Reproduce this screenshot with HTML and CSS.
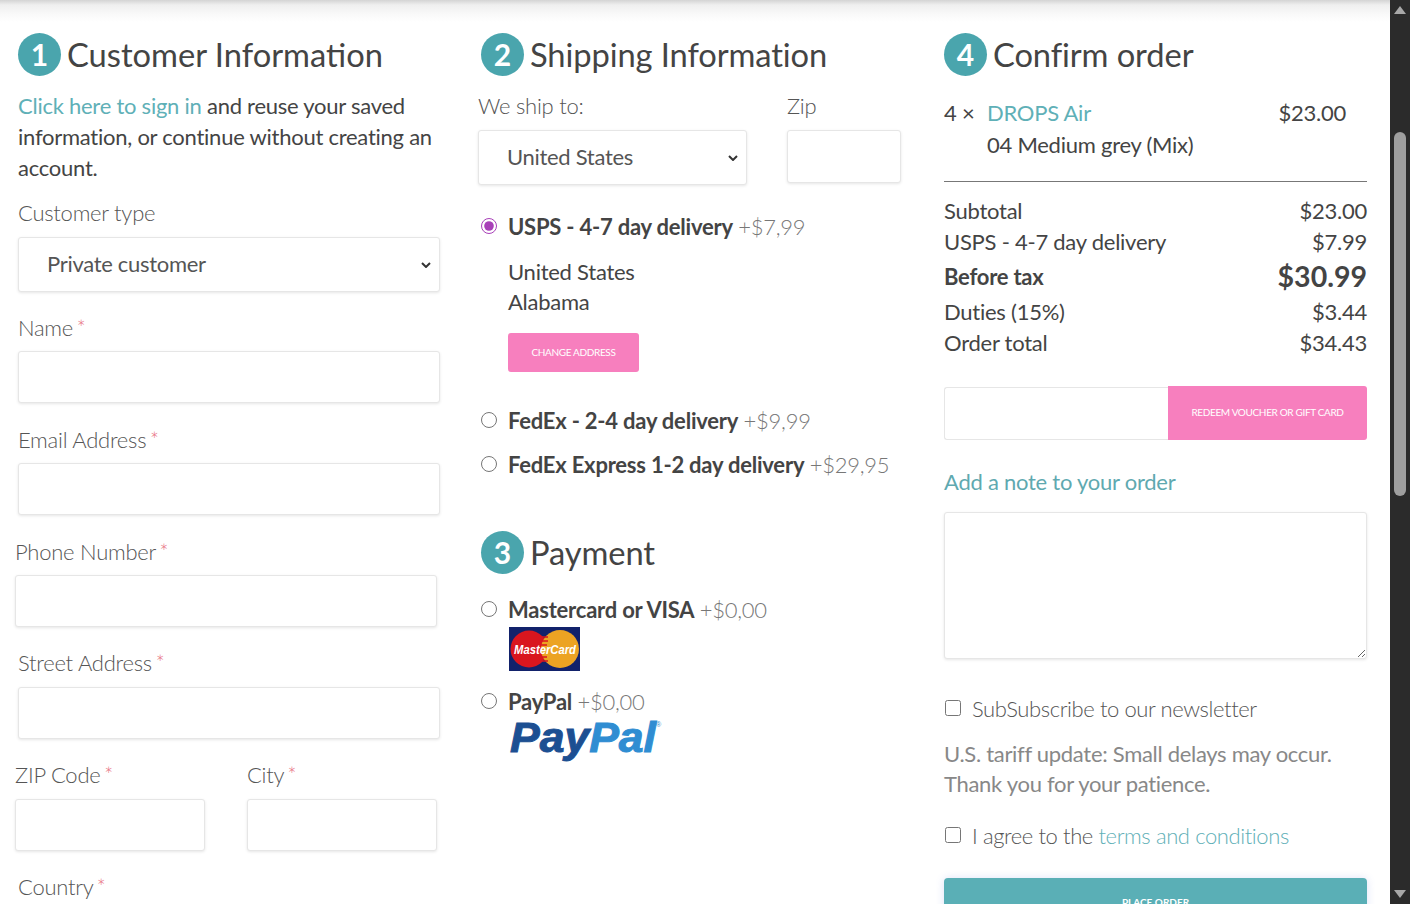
FILE: index.html
```html
<!DOCTYPE html>
<html lang="en">
<head>
<meta charset="utf-8">
<title>Checkout</title>
<link rel="stylesheet" href="styles.css">
</head>
<body>
<div class="page">
  <main class="content">
    <div class="top-shade"></div>
    <div class="columns">
      <section class="col">
        <h2 class="step"><span class="num">1</span><span>Customer Information</span></h2>
        <p class="intro"><a href="#" class="link">Click here to sign in</a> and reuse your saved information, or continue without creating an account.</p>
        <label class="lbl lbl-type">Customer type</label>
        <select class="field sel"><option>Private customer</option></select>
        <div class="group first"><label class="lbl">Name <em>*</em></label><input class="field inp"></div>
        <div class="group"><label class="lbl">Email Address <em>*</em></label><input class="field inp"></div>
        <div class="group shift"><label class="lbl">Phone Number <em>*</em></label><input class="field inp"></div>
        <div class="group street"><label class="lbl">Street Address <em>*</em></label><input class="field inp"></div>
        <div class="group shift city-row">
          <div class="zip-col"><label class="lbl">ZIP Code <em>*</em></label><input class="field inp"></div>
          <div class="city-col"><label class="lbl">City <em>*</em></label><input class="field inp"></div>
        </div>
        <div class="group country"><label class="lbl">Country <em>*</em></label></div>
      </section>

      <section class="col">
        <h2 class="step step-wide"><span class="num">2</span><span>Shipping Information</span></h2>
        <div class="ship-row">
          <div class="ship-country"><label class="lbl">We ship to:</label><select class="field sel"><option>United States</option></select></div>
          <div class="ship-zip"><label class="lbl">Zip</label><input class="field inp"></div>
        </div>
        <div class="opt opt-usps"><input type="radio" name="ship" class="radio" checked><span><b>USPS - 4-7 day delivery</b> <i class="price">+$7,99</i></span></div>
        <div class="addr">United States<br>Alabama</div>
        <button class="pink-btn change">CHANGE ADDRESS</button>
        <div class="opt opt-fedex"><input type="radio" name="ship" class="radio"><span><b>FedEx - 2-4 day delivery</b> <i class="price">+$9,99</i></span></div>
        <div class="opt opt-express"><input type="radio" name="ship" class="radio"><span><b>FedEx Express 1-2 day delivery</b> <i class="price">+$29,95</i></span></div>
        <h2 class="step step-wide step-pay"><span class="num">3</span><span>Payment</span></h2>
        <div class="opt opt-card"><input type="radio" name="pay" class="radio"><span><b>Mastercard or VISA</b> <i class="price">+$0,00</i></span></div>
        <svg class="mc" width="71" height="44" viewBox="0 0 71 44" role="img" aria-label="MasterCard">
          <rect width="71" height="44" fill="#12226b"/>
          <circle cx="20" cy="22" r="18.5" fill="#d9161e"/>
          <circle cx="51" cy="22" r="19" fill="#eca323"/>
          <path d="M33 10h6M32 14h7M32 18h6M32 30h6M33 34h6" stroke="#d9161e" stroke-width="1.5" fill="none"/>
          <text x="36" y="27" class="mc-text" text-anchor="middle" textLength="62" lengthAdjust="spacingAndGlyphs">MasterCard</text>
        </svg>
        <div class="opt opt-paypal"><input type="radio" name="pay" class="radio"><span><b>PayPal</b> <i class="price">+$0,00</i></span></div>
        <svg class="pp" width="156" height="46" viewBox="0 0 156 46" role="img" aria-label="PayPal">
          <text x="1" y="32" class="pp-text" textLength="146" lengthAdjust="spacingAndGlyphs"><tspan class="pp-dark">Pay</tspan><tspan class="pp-light">Pal</tspan></text>
          <text x="147" y="7" class="pp-mark">®</text>
        </svg>
      </section>

      <section class="col">
        <h2 class="step step-wide"><span class="num">4</span><span>Confirm order</span></h2>
        <div class="item">
          <div class="qty">4 ×</div>
          <div class="item-info"><a href="#" class="link">DROPS Air</a><br>04 Medium grey (Mix)</div>
          <div class="item-price">$23.00</div>
        </div>
        <div class="sum">
          <div class="sum-row"><span>Subtotal</span><span>$23.00</span></div>
          <div class="sum-row"><span>USPS - 4-7 day delivery</span><span>$7.99</span></div>
          <div class="sum-row sum-bold"><b>Before tax</b><b class="big">$30.99</b></div>
          <div class="sum-row"><span>Duties (15%)</span><span>$3.44</span></div>
          <div class="sum-row"><span>Order total</span><span>$34.43</span></div>
        </div>
        <div class="voucher"><input class="voucher-inp"><button class="pink-btn redeem">REDEEM VOUCHER OR GIFT CARD</button></div>
        <a href="#" class="note-link">Add a note to your order</a>
        <textarea class="note"></textarea>
        <div class="check news"><input type="checkbox" class="cb"><span class="thin">SubSubscribe to our newsletter</span></div>
        <p class="tariff">U.S. tariff update: Small delays may occur. Thank you for your patience.</p>
        <div class="check terms"><input type="checkbox" class="cb"><span class="thin">I agree to the <a href="#" class="link">terms and conditions</a></span></div>
        <button class="place">PLACE ORDER</button>
      </section>
    </div>
  </main>
  <div class="scrollbar">
    <div class="arrow-up"></div>
    <div class="thumb"></div>
    <div class="spacer"></div>
    <div class="arrow-down"></div>
  </div>
</div>
</body>
</html>
```

FILE: styles.css
```css
* { box-sizing: border-box; }
html, body { margin: 0; height: 904px; overflow: hidden; background: #fff; }
body { font-family: Lato, "Open Sans", sans-serif; font-size: 22px; line-height: 31px; color: #444; letter-spacing: -0.25px; }
.page { display: flex; height: 904px; overflow: hidden; }
.content { flex: 1; min-width: 0; position: relative; overflow: hidden; padding-top: 33px; }
.top-shade { position: absolute; top: 0; left: 0; right: 0; height: 22px; background: linear-gradient(#d4d4d4 0, #efefef 5px, #f9f9f9 14px, #fff 22px); }
.columns { position: relative; display: grid; grid-template-columns: 422px 422px 423px; column-gap: 41px; padding-left: 18px; }
.col { min-width: 0; }
.step { display: flex; align-items: center; margin: 0; font-size: 32.7px; line-height: 43px; font-weight: 400; color: #444; letter-spacing: 0; height: 43px; }
.num { width: 43px; height: 43px; border-radius: 50%; background: #4aa5ad; color: #fff; display: flex; align-items: center; justify-content: center; font-weight: 700; font-size: 30px; margin-right: 6px; flex: none; }
.step-wide { letter-spacing: -0.1px; }
.step-wide .num { margin-right: 6px; }
.link { color: #5fb0b7; text-decoration: none; }
.intro { margin: 14px 0 0; }
.lbl { display: block; font-weight: 300; height: 31px; line-height: 29px; white-space: nowrap; color: #555; }
.lbl em { color: #e8707f; font-style: normal; font-size: 21px; margin-left: -2px; }
.lbl-type { margin-top: 15px; margin-bottom: 8px; }
.field { display: block; width: 100%; background: #fff; border: 1px solid #e6e6e6; border-radius: 3px; box-shadow: 0 1px 3px rgba(0,0,0,.1); font-family: inherit; color: #555; }
.sel { height: 55px; font-size: 22px; letter-spacing: -0.3px; padding: 0 24px 2px 28px; appearance: none; background-image: url("data:image/svg+xml,%3Csvg xmlns='http://www.w3.org/2000/svg' width='10' height='6' viewBox='0 0 10 6'%3E%3Cpath d='M1 1l4 4 4-4' fill='none' stroke='%23333' stroke-width='2'/%3E%3C/svg%3E"); background-repeat: no-repeat; background-position: right 8px center; }
.inp { height: 52px; margin-top: 7px; }
.group { margin-top: 22px; }
.group.first { margin-top: 21px; }
.group.shift { margin-left: -3px; margin-right: 3px; }
.group.street { margin-top: 21px; }
.group.street .inp, .city-row .inp { margin-top: 8px; }
.group.city-row { margin-top: 21px; }
.group.country { margin-top: 21px; }
.city-row { display: flex; gap: 42px; }
.zip-col { width: 190px; }
.city-col { flex: 1; }
.ship-row { display: flex; gap: 40px; margin-top: 15px; margin-left: -3px; }
.ship-country { width: 269px; }
.ship-country .sel { margin-top: 8px; }
.ship-zip { width: 114px; }
.ship-zip .inp { margin-top: 8px; height: 53px; }
.opt { display: flex; align-items: center; white-space: nowrap; }
.radio { width: 16px; height: 16px; margin: 0 11px 2px 0; accent-color: #a83fb8; flex: none; }
.opt b { font-weight: 700; letter-spacing: -0.22px; }
.price { font-style: normal; font-weight: 300; color: #777; }
.opt-usps { margin-top: 26px; }
.addr { margin: 15px 0 0 27px; line-height: 30px; }
.pink-btn { border: 0; background: #f77fbe; color: #fff; font-family: inherit; font-size: 10px; letter-spacing: -0.35px; border-radius: 3px; padding: 0 0 2px; }
.change { display: block; width: 131px; height: 39px; margin: 16px 0 0 27px; }
.opt-fedex { margin-top: 33px; }
.opt-express { margin-top: 13px; }
.step-pay { margin-top: 51px; }
.opt-card { margin-top: 20px; }
.mc { display: block; margin: 2px 0 0 28px; }
.mc-text { font-family: "Liberation Sans", sans-serif; font-weight: 700; font-style: italic; font-size: 13px; fill: #fff; letter-spacing: 0; }
.opt-paypal { margin-top: 15px; }
.pp { display: block; margin: 3px 0 0 28px; }
.pp-text { font-family: "Liberation Sans", sans-serif; font-weight: 700; font-style: italic; font-size: 42px; letter-spacing: 0; stroke-width: 1px; }
.pp-dark { fill: #1c4f92; stroke: #1c4f92; }
.pp-light { fill: #2f8dd2; stroke: #2f8dd2; }
.pp-mark { font-family: "Liberation Sans", sans-serif; font-size: 7px; fill: #2f8dd2; letter-spacing: 0; }
.item { display: flex; margin-top: 21px; padding-bottom: 20px; border-bottom: 1px solid #777; line-height: 32px; }
.qty { width: 43px; }
.item-info { flex: 1; }
.item-price { margin-right: 21px; }
.sum { margin-top: 13px; }
.sum-row { display: flex; justify-content: space-between; }
.sum-bold { height: 39px; align-items: center; }
.big { font-size: 28.5px; letter-spacing: 0; }
.voucher { display: flex; margin-top: 28px; height: 54px; }
.voucher-inp { width: 224px; height: 53px; margin-top: 1px; border: 1px solid #e6e6e6; border-right: 0; border-radius: 3px 0 0 3px; background: #fff; }
.redeem { flex: 1; border-radius: 0 3px 3px 0; }
.note-link { display: block; margin-top: 26px; color: #5fa9b0; text-decoration: none; }
.note { display: block; width: 100%; height: 147px; margin-top: 15px; border: 1px solid #e6e6e6; border-radius: 3px; box-shadow: 0 1px 3px rgba(0,0,0,.1); background: #fff; }
.check { display: flex; align-items: center; white-space: nowrap; }
.cb { width: 16px; height: 16px; margin: 0 11px 2px 1px; flex: none; }
.thin { font-weight: 300; letter-spacing: -0.4px; color: #555; }
.news { margin-top: 34px; }
.tariff { margin: 15px 0 0; line-height: 30px; color: #888; letter-spacing: -0.3px; }
.terms { margin-top: 21px; }
.place { display: block; width: 100%; height: 48px; margin-top: 27px; border: 0; border-radius: 4px; background: #5aafb6; color: #fff; font-family: inherit; font-size: 10px; font-weight: 700; box-shadow: 0 0 8px rgba(90,110,220,.2); }
.scrollbar { width: 20px; flex: none; background: #2b2b2b; display: flex; flex-direction: column; align-items: center; padding: 6px 0; }
.arrow-up { width: 0; height: 0; border-left: 6px solid transparent; border-right: 6px solid transparent; border-bottom: 8px solid #a8a8a8; }
.arrow-down { width: 0; height: 0; border-left: 6px solid transparent; border-right: 6px solid transparent; border-top: 8px solid #a8a8a8; }
.thumb { width: 12px; height: 364px; margin-top: 118px; border-radius: 6px; background: #9f9f9f; }
.spacer { flex: 1; }
```
